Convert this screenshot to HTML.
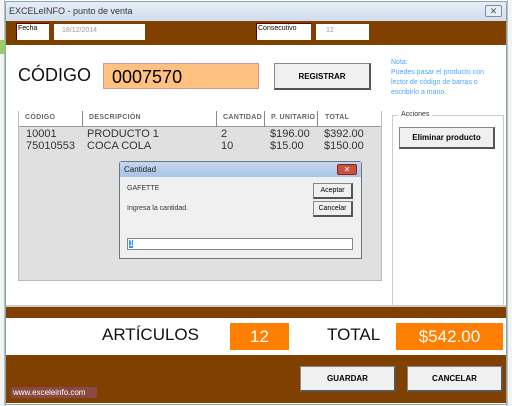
<!DOCTYPE html><html><head><style>
body{margin:0;width:512px;height:406px;position:relative;background:#fff;font-family:"Liberation Sans",sans-serif;overflow:hidden}
div{position:absolute;box-sizing:border-box}
.t{white-space:nowrap}
.btn{background:#f0f0f0;border:1px solid #888;border-right:2px solid #555;border-bottom:2px solid #555;font-size:8px;font-weight:bold;display:flex;align-items:center;justify-content:center}
.h{font-size:7px;color:#666;font-weight:bold;top:114px;letter-spacing:.3px}
.r{font-size:11px;color:#333}
</style></head><body>
<div style="left:0;top:0;width:5px;height:406px;background:#f4f4f4;border-right:1px solid #bbb"></div>
<div style="left:0;top:40px;width:5px;height:14px;background:#9c6"></div>
<div style="left:507px;top:0;width:5px;height:406px;background:#f4f4f4;border-left:1px solid #bbb"></div>
<div style="left:5px;top:1px;width:502px;height:404px;border:1px solid #8aa;background:linear-gradient(#e6eef8,#d0dcec 20px,#fff 20px)"></div>
<div class="t" style="left:9px;top:6px;font-size:9px;color:#333">EXCELeINFO - punto de venta</div>
<div style="left:485px;top:5px;width:17px;height:12px;border:1px solid #889;border-radius:2px;background:#e8eef6;font-size:9px;text-align:center;line-height:10px;color:#555">✕</div>
<div style="left:6px;top:21px;width:500px;height:24px;background:#804000"></div>
<div class="t" style="left:16px;top:23px;width:33px;height:17px;background:#fff;font-size:7px;padding:1px 0 0 1px;border-top:1px solid #600;border-left:1px solid #600">Fecha</div>
<div class="t" style="left:54px;top:24px;width:91px;height:16px;background:#fff;font-size:7px;color:#999;padding:3px 0 0 8px">18/12/2014</div>
<div class="t" style="left:256px;top:23px;width:55px;height:17px;background:#fff;font-size:7px;padding:1px 0 0 1px;border-top:1px solid #600;border-left:1px solid #600">Consecutivo</div>
<div class="t" style="left:316px;top:24px;width:53px;height:16px;background:#fff;font-size:7px;color:#999;padding:3px 0 0 10px">12</div>
<div class="t" style="left:18px;top:65px;font-size:18px;color:#111">CÓDIGO</div>
<div class="t" style="left:103px;top:63px;width:156px;height:26px;background:#ffc080;border:1px solid #c99;font-size:18px;padding:3px 0 0 8px">0007570</div>
<div class="btn" style="left:274px;top:63px;width:97px;height:27px">REGISTRAR</div>
<div class="t" style="left:391px;top:58px;font-size:7px;line-height:10px;color:#4da6ff">Nota:<br>Puedes pasar el producto con<br>lector de código de barras o<br>escribirlo a mano.</div>
<div style="left:18px;top:111px;width:364px;height:170px;background:#e0e0e0;border:1px solid #bbb"></div>
<div style="left:19px;top:111px;width:362px;height:16px;background:#fff;border-bottom:1px solid #999"></div>
<div style="left:82px;top:111px;width:1px;height:16px;background:#888"></div>
<div style="left:216px;top:111px;width:1px;height:16px;background:#888"></div>
<div style="left:264px;top:111px;width:1px;height:16px;background:#888"></div>
<div style="left:317px;top:111px;width:1px;height:16px;background:#888"></div>
<div class="t h" style="left:25px">CÓDIGO</div><div class="t h" style="left:89px">DESCRIPCIÓN</div><div class="t h" style="left:223px">CANTIDAD</div><div class="t h" style="left:271px">P. UNITARIO</div><div class="t h" style="left:325px">TOTAL</div>
<div class="t r" style="left:26px;top:128px">10001<br>75010553</div>
<div class="t r" style="left:87px;top:128px">PRODUCTO 1<br>COCA COLA</div>
<div class="t r" style="left:221px;top:128px">2<br>10</div>
<div class="t r" style="left:270px;top:128px">$196.00<br>$15.00</div>
<div class="t r" style="left:324px;top:128px">$392.00<br>$150.00</div>
<div style="left:392px;top:115px;width:112px;height:190px;border:1px solid #ccc;border-bottom:none"></div>
<div class="t" style="left:398px;top:111px;font-size:7px;background:#fff;padding:0 3px;color:#333">Acciones</div>
<div class="btn" style="left:399px;top:127px;width:96px;height:22px">Eliminar producto</div>
<div style="left:119px;top:161px;width:243px;height:98px;background:#f0f0f0;border:1px solid #678;border-radius:3px 3px 0 0"></div>
<div style="left:120px;top:162px;width:241px;height:15px;background:linear-gradient(#c4d6ee,#a8c4e6)"></div>
<div class="t" style="left:124px;top:165px;font-size:8px;color:#222">Cantidad</div>
<div style="left:337px;top:164px;width:20px;height:11px;background:#c8503c;border:1px solid #822;border-radius:2px;color:#fff;font-size:8px;text-align:center;line-height:10px">✕</div>
<div class="t" style="left:127px;top:185px;font-size:7px;color:#333">GAFETTE</div>
<div class="t" style="left:127px;top:205px;font-size:7px;color:#333">Ingresa la cantidad.</div>
<div class="btn" style="left:313px;top:183px;width:40px;height:16px;font-weight:normal;font-size:7px">Aceptar</div>
<div class="btn" style="left:313px;top:201px;width:40px;height:16px;font-weight:normal;font-size:7px">Cancelar</div>
<div style="left:127px;top:238px;width:226px;height:12px;background:#fff;border:1px solid #888"><div style="left:1px;top:1px;width:4px;height:8px;background:#39f;color:#fff;font-size:8px;line-height:8px">1</div></div>
<div style="left:6px;top:305px;width:500px;height:2px;background:#ccc"></div>
<div style="left:6px;top:307px;width:500px;height:11px;background:#804000"></div>
<div class="t" style="left:102px;top:325px;font-size:17px;color:#111">ARTÍCULOS</div>
<div style="left:230px;top:323px;width:59px;height:27px;background:#ff8000;color:#fff;font-size:17px;text-align:center;line-height:27px">12</div>
<div class="t" style="left:327px;top:325px;font-size:17px;color:#111">TOTAL</div>
<div style="left:396px;top:323px;width:107px;height:27px;background:#ff8000;color:#fff;font-size:17px;text-align:center;line-height:27px">$542.00</div>
<div style="left:6px;top:355px;width:500px;height:48px;background:#804000"></div>
<div class="btn" style="left:300px;top:366px;width:96px;height:26px">GUARDAR</div>
<div class="btn" style="left:407px;top:366px;width:96px;height:26px">CANCELAR</div>
<div class="t" style="left:11px;top:387px;width:86px;height:11px;background:#8a4a44;color:#fff;font-size:8px;line-height:11px;padding-left:2px">www.exceleinfo.com</div>
</body></html>
